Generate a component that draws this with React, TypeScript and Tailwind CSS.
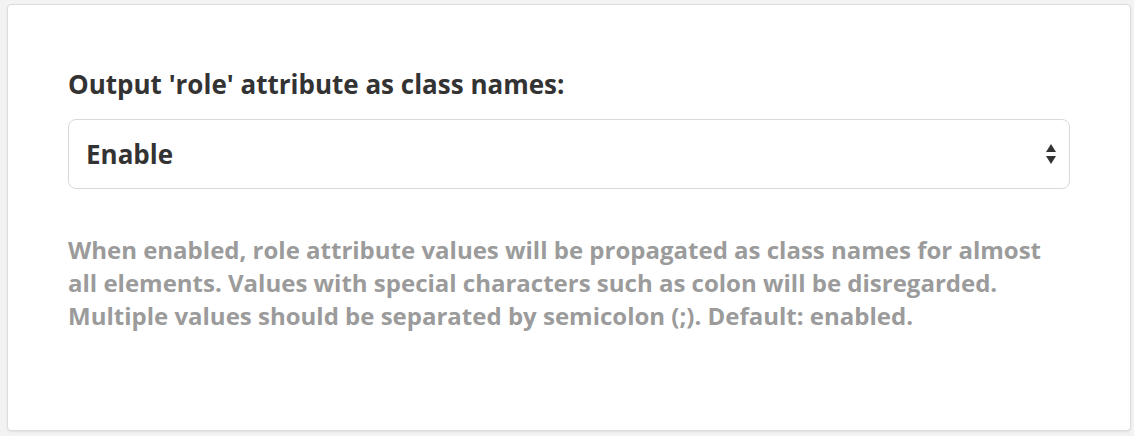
export default function App() {
  return (
    <div className="w-[1134px] h-[436px] bg-[#f3f3f3] pt-[4px] pl-[7px] pr-[3px] pb-[5px] font-['Open_Sans',sans-serif]">
      <div className="h-full bg-white border border-[#dcdcdc] rounded-[4px] shadow-[0_1px_2px_rgba(0,0,0,0.08)] px-[60px] pt-[63px]">
        <label className="block text-[26px] leading-[32px] font-bold text-[#333]">
          Output 'role' attribute as class names:
        </label>
        <div className="mt-[19px] h-[70px] w-[1002px] border border-[#d9d9d9] rounded-[8px] flex items-center justify-between pl-[17px] pr-[12px]">
          <span className="text-[26px] font-bold text-[#333]">Enable</span>
          <svg width="12" height="22" viewBox="0 0 12 22" className="text-[#333]">
            <path d="M6 1 L11 9 L1 9 Z" fill="currentColor" />
            <path d="M1 13 L11 13 L6 21 Z" fill="currentColor" />
          </svg>
        </div>
        <p className="mt-[44px] w-[1002px] text-[24px] leading-[33px] font-bold text-[#9b9b9b]">
          When enabled, role attribute values will be propagated as class names for almost all elements. Values with special characters such as colon will be disregarded. Multiple values should be separated by semicolon (;). Default: enabled.
        </p>
      </div>
    </div>
  )
}
